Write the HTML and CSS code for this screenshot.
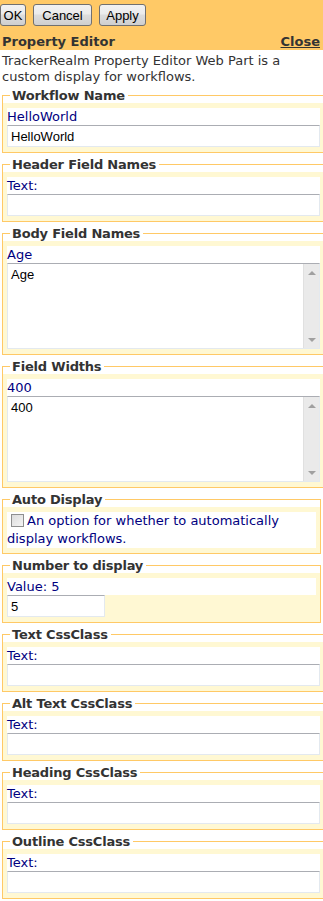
FILE: index.html
```html
<!DOCTYPE html>
<html lang="en">
<head>
    <meta charset="UTF-8">
    <meta name="viewport" content="width=device-width, initial-scale=1.0">
    <title>Property Editor</title>
    <link rel="stylesheet" href="styles.css">
</head>
<body>

    <!-- Toolbar and title -->
    <div class="toolbar">
        <div class="toolbar-buttons">
            <button class="btn btn-ok">OK</button>
            <button class="btn btn-cancel">Cancel</button>
            <button class="btn btn-apply">Apply</button>
        </div>
        <div class="toolbar-title">
            <span>Property Editor</span>
            <a href="#" class="close-link">Close</a>
        </div>
    </div>

    <p class="description">TrackerRealm Property Editor Web Part is a custom display for workflows.</p>

    <fieldset class="prop">
        <legend>Workflow Name</legend>
        <div class="prop-body">
            <div class="prop-label">HelloWorld</div>
            <input type="text" class="prop-input" value="HelloWorld">
        </div>
    </fieldset>

    <fieldset class="prop">
        <legend>Header Field Names</legend>
        <div class="prop-body">
            <div class="prop-label">Text:</div>
            <input type="text" class="prop-input">
        </div>
    </fieldset>

    <fieldset class="prop">
        <legend>Body Field Names</legend>
        <div class="prop-body">
            <div class="prop-label">Age</div>
            <div class="prop-area">
                <textarea class="prop-textarea">Age</textarea>
                <div class="scrollbar"><span class="arrow-up"></span><span class="arrow-down"></span></div>
            </div>
        </div>
    </fieldset>

    <fieldset class="prop">
        <legend>Field Widths</legend>
        <div class="prop-body">
            <div class="prop-label">400</div>
            <div class="prop-area">
                <textarea class="prop-textarea">400</textarea>
                <div class="scrollbar"><span class="arrow-up"></span><span class="arrow-down"></span></div>
            </div>
        </div>
    </fieldset>

    <fieldset class="prop">
        <legend>Auto Display</legend>
        <div class="prop-body">
            <label class="prop-label prop-check"><input type="checkbox" class="checkbox">An option for whether to automatically display workflows.</label>
        </div>
    </fieldset>

    <fieldset class="prop">
        <legend>Number to display</legend>
        <div class="prop-body">
            <div class="prop-label">Value: 5</div>
            <input type="text" class="prop-input prop-input-small" value="5">
        </div>
    </fieldset>

    <fieldset class="prop">
        <legend>Text CssClass</legend>
        <div class="prop-body">
            <div class="prop-label">Text:</div>
            <input type="text" class="prop-input">
        </div>
    </fieldset>

    <fieldset class="prop">
        <legend>Alt Text CssClass</legend>
        <div class="prop-body">
            <div class="prop-label">Text:</div>
            <input type="text" class="prop-input">
        </div>
    </fieldset>

    <fieldset class="prop">
        <legend>Heading CssClass</legend>
        <div class="prop-body">
            <div class="prop-label">Text:</div>
            <input type="text" class="prop-input">
        </div>
    </fieldset>

    <fieldset class="prop">
        <legend>Outline CssClass</legend>
        <div class="prop-body">
            <div class="prop-label">Text:</div>
            <input type="text" class="prop-input">
        </div>
    </fieldset>

</body>
</html>
```

FILE: styles.css
```css
body {
    margin: 0;
    font-family: "DejaVu Sans", Verdana, sans-serif;
    font-size: 13px;
    color: #333;
    background: #fff;
}
.toolbar {
    background-color: #ffc966;
    padding-top: 4px;
}
.toolbar-buttons {
    display: flex;
    gap: 7px;
    height: 22px;
}
.btn {
    height: 22px;
    padding: 0;
    font-family: "Liberation Sans", Arial, sans-serif;
    font-size: 13px;
    color: #000;
    border: 1px solid #707070;
    border-radius: 3px;
    background: linear-gradient(#f2f2f2, #ebebeb 45%, #dddddd 50%, #cfcfcf);
}
.btn-ok { width: 26px; }
.btn-cancel { width: 59px; }
.btn-apply { width: 47px; }
.toolbar-title {
    display: flex;
    justify-content: space-between;
    align-items: center;
    height: 17px;
    margin-top: 7px;
    padding: 0 3px 0 2px;
    font-weight: bold;
    line-height: 17px;
}
.close-link {
    color: #333;
    text-decoration: underline;
}
.description {
    margin: 0;
    padding: 3px 2px 3px 2px;
    line-height: 16px;
}
.prop {
    width: 317px;
    margin: 0 0 4px 2px;
    padding: 0;
    border: 1px solid #ffc966;
}
.prop legend {
    margin-left: 7px;
    padding: 0 3px 0 2px;
    font-weight: bold;
    line-height: 15px;
    letter-spacing: -0.2px;
}
.prop-body {
    background-color: #fff8d3;
    padding: 5px 4px 5px 4px;
}
.prop-label {
    display: block;
    background: #fff;
    color: #000080;
    line-height: 17px;
}
.prop-input {
    display: block;
    box-sizing: border-box;
    width: 313px;
    height: 22px;
    margin: 0;
    padding: 0 3px;
    font-family: "Liberation Sans", Arial, sans-serif;
    font-size: 13px;
    color: #000;
    border: 1px solid #e3e9ef;
    border-top-color: #abadb3;
    background: #fff;
}
.prop-input-small {
    width: 98px;
}
.prop-area {
    display: flex;
    box-sizing: border-box;
    width: 313px;
    height: 86px;
    border: 1px solid #e3e9ef;
    border-top-color: #abadb3;
    background: #fff;
}
.prop-textarea {
    flex: 1;
    margin: 0;
    padding: 3px 3px;
    border: none;
    resize: none;
    outline: none;
    font-family: "Liberation Sans", Arial, sans-serif;
    font-size: 13px;
    color: #000;
}
.scrollbar {
    display: flex;
    flex-direction: column;
    justify-content: space-between;
    align-items: center;
    width: 16px;
    padding: 7px 0 6px 0;
    box-sizing: border-box;
    background: #eaeaea;
    border-left: 1px solid #e0e0e0;
}
.arrow-up {
    width: 0;
    height: 0;
    border-left: 4px solid transparent;
    border-right: 4px solid transparent;
    border-bottom: 4px solid #a0a0a0;
}
.arrow-down {
    width: 0;
    height: 0;
    border-left: 4px solid transparent;
    border-right: 4px solid transparent;
    border-top: 4px solid #a0a0a0;
}
.prop-check {
    line-height: 18px;
}
.checkbox {
    appearance: none;
    width: 13px;
    height: 13px;
    margin: 0 3px 0 4px;
    vertical-align: -2px;
    border: 1px solid #8e8f8f;
    background: linear-gradient(135deg, #dcdcdc, #f4f4f4);
    box-sizing: border-box;
}
```
